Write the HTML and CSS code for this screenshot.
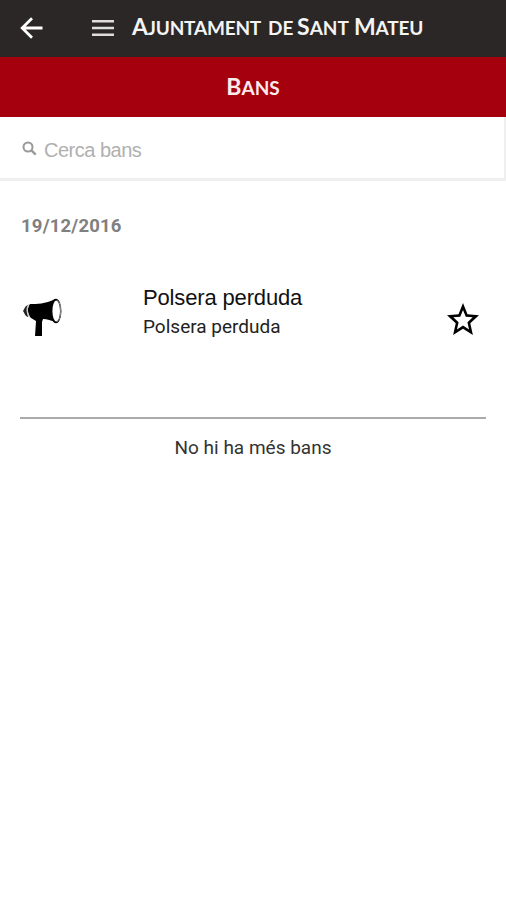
FILE: index.html
```html
<!DOCTYPE html>
<html lang="ca">
<head>
<meta charset="utf-8">
<title>Bans</title>
<link rel="stylesheet" href="styles.css">
</head>
<body>
<header class="topbar">
  <svg class="back" viewBox="0 0 24 24" width="24" height="24"><path d="M23.5 12H4M13 2.2L3.2 12l9.8 9.8" fill="none" stroke="#fff" stroke-width="2.8"/></svg>
  <svg class="menu" viewBox="0 0 22 16" width="22" height="16"><path d="M0 1.3h22M0 8h22M0 14.7h22" stroke="#dedede" stroke-width="2.4"/></svg>
  <h1 class="title"><span class="word first">Ajuntament</span> <span class="word small">de</span> <span class="word sant">Sant</span> <span class="word mateu">Mateu</span></h1>
</header>
<div class="section"><span class="word bans">Bans</span></div>
<div class="search">
  <svg class="lens" viewBox="0 0 15 15" width="15" height="15"><circle cx="6" cy="6" r="4.5" fill="none" stroke="#999" stroke-width="2"/><path d="M9.2 9.2l4.5 4.5" stroke="#999" stroke-width="2.4"/></svg>
  <span class="placeholder">Cerca bans</span>
</div>
<main class="content">
  <div class="date">19/12/2016</div>
  <article class="item">
    <svg class="horn" viewBox="0 0 40 40" width="40" height="40"><path d="M7 6C14 6 22 6 32 1c8 5 8 19 1 24-5-3-9-4-13-4l-1 3v14h-7l1-15-5-3C4 15 4 10 7 6z" fill="#000"/><path d="M5 7C2 8 2 10 0 13c2 3 2 5 5 6z" fill="#222"/><path d="M5.5 6.5q-3 6.5 1 13" fill="none" stroke="#ccc" stroke-width="1.4"/><ellipse cx="33" cy="13" rx="5.4" ry="12.2" fill="#000"/><ellipse cx="33.2" cy="13" rx="3.8" ry="10.4" fill="#fff"/><path d="M34 2.5c5 2 5 19 0 21" fill="none" stroke="#999" stroke-width="1"/></svg>
    <div class="text">
      <div class="name">Polsera perduda</div>
      <div class="detail">Polsera perduda</div>
    </div>
    <svg class="star" viewBox="2 2 20 19" width="32" height="32" preserveAspectRatio="none"><path d="M22 9.24l-7.19-.62L12 2 9.19 8.63 2 9.24l5.46 4.73L5.82 21 12 17.27 18.18 21l-1.63-7.03L22 9.24zM12 15.4l-3.76 2.27 1-4.28-3.32-2.88 4.38-.38L12 6.1l1.71 4.04 4.38.38-3.32 2.88 1 4.28L12 15.4z"/></svg>
  </article>
  <p class="end">No hi ha més bans</p>
</main>
</body>
</html>
```
FILE: styles.css
```css
* { box-sizing: border-box; }
body { margin: 0; background: #fff; font-family: Roboto, sans-serif; color: #111; }
svg { display: block; flex: none; }
.topbar { height: 57px; background: #2b2727; display: flex; align-items: center; padding-left: 19px; }
.back { margin-right: 49px; margin-top: -2px; }
.menu { margin-right: 18px; margin-top: -2px; }
.title { margin: -3px 0 0; font: 700 19px/30px Lato, sans-serif; color: #f4f4f4; white-space: nowrap; display: flex; align-items: baseline; }
.word { display: block; text-transform: uppercase; font-size: 19px; }
.word::first-letter { font-size: 23px; }
.small::first-letter { font-size: 19px; }
.first { width: 136px; letter-spacing: -.2px; }
.small { width: 29px; }
.sant { width: 57px; }
.mateu { letter-spacing: -.2px; }
.section { height: 60px; background: #a5000d; display: flex; align-items: center; justify-content: center; color: #fbeaec; font: 700 19px/30px Lato, sans-serif; }
.search { height: 64px; border-bottom: 3px solid #efefef; border-right: 2px solid #efefef; display: flex; align-items: center; padding: 4px 0 0 22px; }
.lens { margin-right: 7px; margin-top: -2px; }
.placeholder { font: 20px/24px "Liberation Sans", sans-serif; color: #b0b0b0; letter-spacing: -.5px; }
.content { padding: 33px 20px 0; }
.date { font-size: 18.5px; line-height: 24px; font-weight: 700; color: #808080; padding-left: 1px; letter-spacing: .2px; }
.item { height: 181px; border-bottom: 2px solid #aaa; display: flex; align-items: flex-start; padding-right: 7px; }
.horn { margin: 60px 0 0 3px; }
.text { margin: 46px 0 0 80px; flex: 1; }
.name { font: 22px/28px "Liberation Sans", sans-serif; letter-spacing: -.15px; }
.detail { font-size: 19px; line-height: 30px; color: #222; }
.star { margin-top: 65px; }
.end { margin: 17px 0 0; text-align: center; font-size: 19px; line-height: 24px; color: #333; }
```
